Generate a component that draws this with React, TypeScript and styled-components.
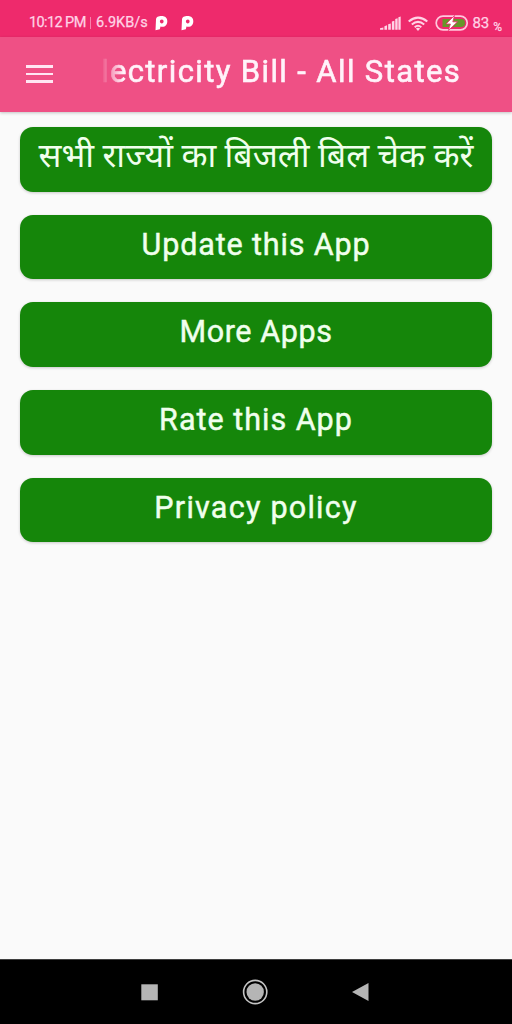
import React from "react";
import styled, { createGlobalStyle } from "styled-components";

const GlobalStyle = createGlobalStyle`
  * { box-sizing: border-box; }
  body { margin: 0; background: #fafafa; }
`;

const Screen = styled.div`
  display: flex;
  flex-direction: column;
  width: 512px;
  height: 1024px;
  overflow: hidden;
  background: #fafafa;
  font-family: Roboto, "Noto Sans", "Liberation Sans", sans-serif;
`;

const StatusBar = styled.header`
  display: flex;
  align-items: flex-start;
  justify-content: space-between;
  height: 37px;
  flex: none;
  padding: 13px 10px 0 29px;
  background: #ee2a6c;
  color: #ffd3e6;
`;

const StatusGroup = styled.div`
  display: flex;
  align-items: center;
  height: 20px;
`;

const StatusText = styled.span<{ $size: number; $spacing?: number; $width?: number; $left?: number; $top?: number }>`
  flex: none;
  font-size: ${(p) => p.$size}px;
  line-height: 18px;
  letter-spacing: ${(p) => p.$spacing ?? 0}px;
  width: ${(p) => (p.$width ? `${p.$width}px` : "auto")};
  margin: ${(p) => p.$top ?? 0}px 0 0 ${(p) => p.$left ?? 0}px;
  -webkit-text-stroke: 0.25px currentColor;
  white-space: nowrap;
`;

const Divider = styled.span`
  flex: none;
  width: 1px;
  height: 12px;
  margin-right: 5.5px;
  background: #f880ac;
`;

const StatusIcon = styled.svg<{ $left?: number }>`
  display: block;
  flex: none;
  margin-left: ${(p) => p.$left ?? 0}px;
`;

const AppBar = styled.div`
  display: flex;
  align-items: flex-start;
  height: 75px;
  flex: none;
  padding-left: 26px;
  background: #ef5085;
  box-shadow: 0 1px 3px rgba(0, 0, 0, 0.22);
`;

const MenuButton = styled.button`
  display: flex;
  flex-direction: column;
  gap: 5px;
  width: 28px;
  margin-top: 28px;
  padding: 0;
  border: 0;
  background: none;
`;

const MenuLine = styled.span`
  height: 2.7px;
  width: 27px;
  background: #ffe6f3;
`;

const Title = styled.h1`
  margin: 15px 0 0 47px;
  width: 370px;
  font-size: 31px;
  font-weight: 400;
  line-height: 40px;
  letter-spacing: 1.38px;
  -webkit-text-stroke: 0.6px currentColor;
  white-space: nowrap;
  color: #fff3fa;
  mask-image: linear-gradient(to right, transparent 0, #000 22px);
`;

const Content = styled.main`
  display: flex;
  flex: 1;
  flex-direction: column;
  gap: 23px;
  padding: 15.2px 20px 0;
`;

const ActionButton = styled.button<{ $spacing: number; $size?: number }>`
  display: flex;
  justify-content: center;
  align-items: flex-start;
  height: 64.6px;
  flex: none;
  padding: ${(p) => (p.$size ? 9 : 10)}px 0 0;
  border: 0;
  border-radius: 13px;
  background: #15860a;
  box-shadow: 0 1px 3px rgba(0, 0, 0, 0.2);
  color: #f0ffed;
  font-family: inherit;
  font-size: ${(p) => p.$size ?? 30.5}px;
  font-weight: 400;
  line-height: 40px;
  letter-spacing: ${(p) => p.$spacing}px;
  -webkit-text-stroke: ${(p) => (p.$size ? 0 : 0.45)}px currentColor;
  white-space: nowrap;
`;

const NavBar = styled.nav`
  display: flex;
  align-items: center;
  justify-content: space-between;
  height: 65px;
  flex: none;
  padding: 0 143px 0 141px;
  border-top: 1px solid #404040;
  background: #000;
`;

const actions = [
  { label: "सभी राज्यों का बिजली बिल चेक करें", spacing: 0, size: 33.9 },
  { label: "Update this App", spacing: 0.85 },
  { label: "More Apps", spacing: 0.6 },
  { label: "Rate this App", spacing: 1 },
  { label: "Privacy policy", spacing: 1.25 },
];

const ParkingIcon = ({ left }: { left: number }) => (
  <StatusIcon $left={left} width="14" height="16" viewBox="0 0 14 16">
    <path
      fill="#fff"
      fillRule="evenodd"
      d="M1 4.500C1 2 3.500 1 6.500 1C10.500 1 12.300 3.200 12.300 6.200C12.300 9.500 10.300 11.800 7.500 11.800C6.500 11.800 6 11.700 5.500 11.500L4.800 14.300L.5 15.300ZM6.900 4.600C5.700 4.600 4.900 5.400 4.900 6.500C4.900 7.600 5.700 8.400 6.800 8.400C7.900 8.400 8.600 7.600 8.600 6.500C8.600 5.400 7.900 4.600 6.900 4.600Z"
    />
  </StatusIcon>
);

export default function App() {
  return (
    <Screen>
      <GlobalStyle />
      <StatusBar>
        <StatusGroup>
          <StatusText $size={14.5} $spacing={-0.6} $width={60.5}>10:12 PM</StatusText>
          <Divider />
          <StatusText $size={14.5} $spacing={0} $width={53}>6.9KB/s</StatusText>
          <ParkingIcon left={5.5} />
          <ParkingIcon left={12} />
        </StatusGroup>
        <StatusGroup>
          <StatusIcon width="21" height="15" viewBox="0 0 20 14" fill="#ffd3e6">
            <path d="M0 13v-1.400l3.200-.9V13zM4.200 13v-3.500l2.500-.8V13zM7.800 13V7.700L10.300 6.900V13zM11.300 13V5.200l2.400-.8V13zM14.500 13V2.800l2.300-.8V13zM17.500 13V1l2.200-.7V13z" />
          </StatusIcon>
          <StatusIcon $left={7} width="20" height="15" viewBox="0 0 20 15">
            <g fill="none" stroke="#ffd3e6" strokeWidth="2">
              <path d="M.7 5.500Q10-2.200 19.300 5.500" />
              <path d="M3.800 8.500Q10 3.200 16.200 8.500" />
              <path d="M6.700 11.200Q10 8.400 13.300 11.200" />
            </g>
            <path fill="#ffd3e6" d="M7.900 12.600Q10 10.900 12.100 12.600L10 14.900z" />
          </StatusIcon>
          <StatusIcon $left={7} width="34" height="16" viewBox="0 0 34 16">
            <rect x="1.200" y="1.200" width="31" height="13.600" rx="6.800" fill="none" stroke="#ffc7dc" strokeWidth="1.700" />
            <path d="M7.500 4H26a4 4 0 0 1 0 8H7.500z" fill="#67962a" />
            <path d="M19.500 .5L11 9h4.400l-2 6.500L22.500 6.800h-4.700z" fill="#fff" stroke="#ee2a6c" strokeWidth=".8" />
          </StatusIcon>
          <StatusText $size={15} $width={20} $left={3}>83</StatusText>
          <StatusText $size={12} $top={8} $left={0.8}>%</StatusText>
        </StatusGroup>
      </StatusBar>
      <AppBar>
        <MenuButton aria-label="Menu">
          <MenuLine />
          <MenuLine />
          <MenuLine />
        </MenuButton>
        <Title>lectricity Bill - All States</Title>
      </AppBar>
      <Content>
        {actions.map((a) => (
          <ActionButton key={a.label} $spacing={a.spacing} $size={a.size}>
            {a.label}
          </ActionButton>
        ))}
      </Content>
      <NavBar>
        <StatusIcon width="17" height="17" viewBox="0 0 17 17">
          <rect x=".3" y=".3" width="16.500" height="16" fill="#b5b5b5" />
        </StatusIcon>
        <StatusIcon width="26" height="26" viewBox="0 0 26 26">
          <circle cx="13.200" cy="13" r="11.600" fill="none" stroke="#c5c5c5" strokeWidth="1.600" />
          <circle cx="13.200" cy="13" r="8.700" fill="#b5b5b5" />
        </StatusIcon>
        <StatusIcon width="17" height="18" viewBox="0 0 17 18">
          <path d="M0 9L16.500 0V18z" fill="#b5b5b5" />
        </StatusIcon>
      </NavBar>
    </Screen>
  );
}
